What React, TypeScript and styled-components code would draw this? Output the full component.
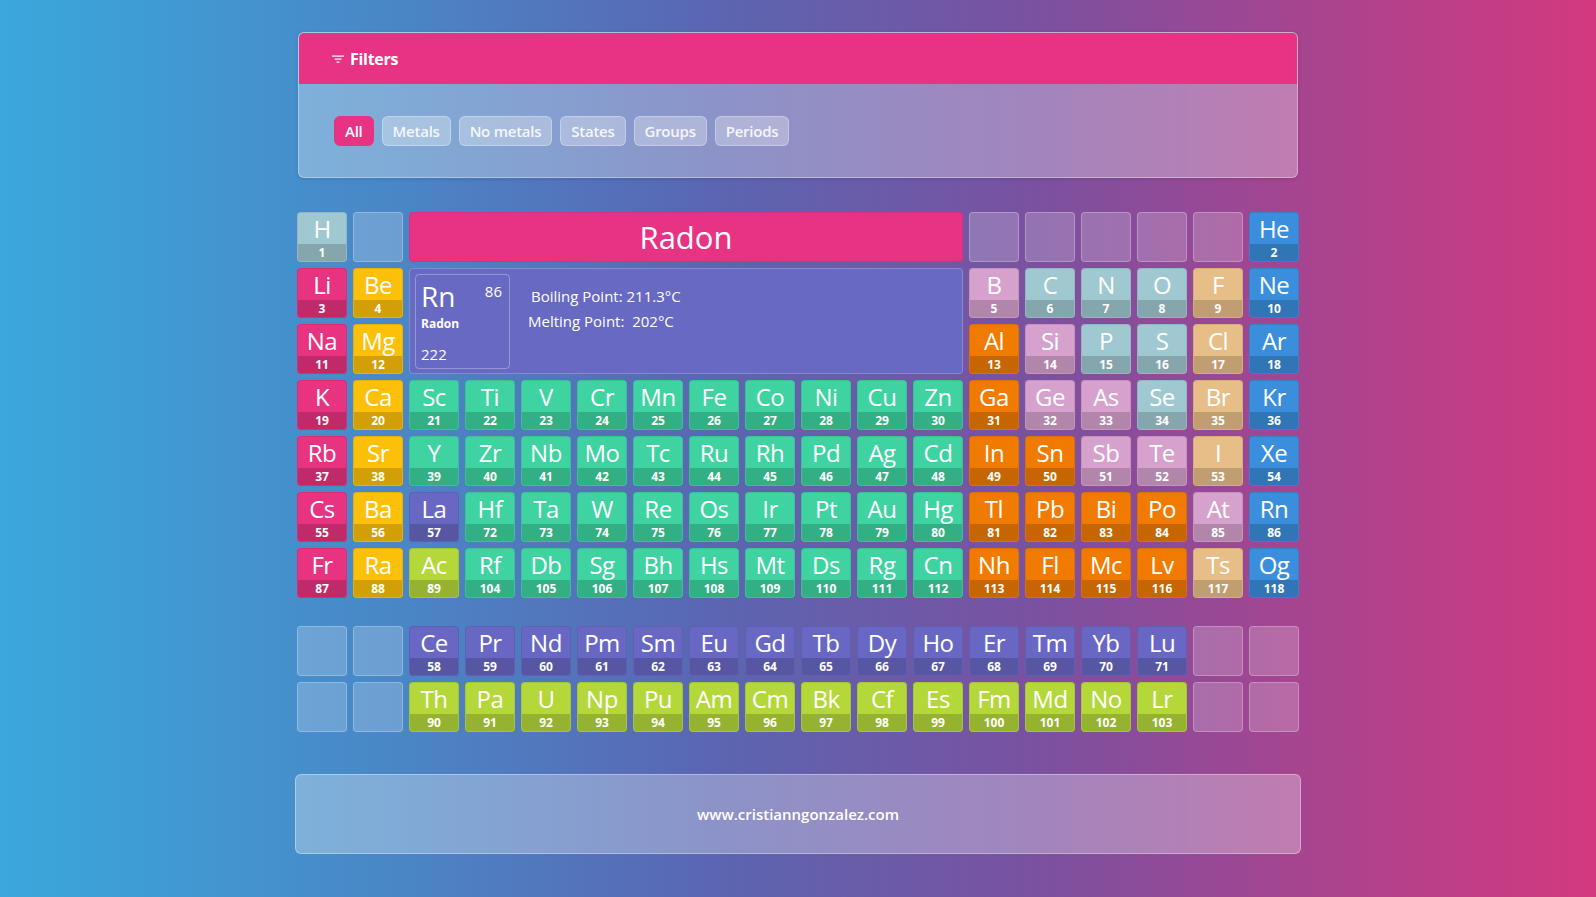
import React from "react";
import styled, { createGlobalStyle } from "styled-components";

const GlobalStyle = createGlobalStyle`
  html, body { margin: 0; padding: 0; }
  body {
    min-height: 100vh;
    font-family: "Open Sans", "Noto Sans", sans-serif;
    background: linear-gradient(90deg, #3aa8dc 0%, #4a86c6 25%, #5b65b1 45%, #7a51a0 65%, #a8448f 82%, #d3397f 100%);
    color: #fff;
  }
`;

type Cat =
  | "alkali"
  | "alkaline"
  | "transition"
  | "post"
  | "metalloid"
  | "nonmetal"
  | "halogen"
  | "noble"
  | "lanthanide"
  | "actinide";

const COLORS: Record<Cat, string> = {
  alkali: "#e83380",
  alkaline: "#fdc009",
  transition: "#3ed3a0",
  post: "#f07b00",
  metalloid: "#d6a2cd",
  nonmetal: "#a0c8d0",
  halogen: "#e7be88",
  noble: "#3a8edc",
  lanthanide: "#6868c4",
  actinide: "#b4d83a",
};

type Cell = { s: string; n: number; c: Cat; col: number; row: number } | { empty: true; col: number; row: number };

const cells: Cell[] = [];
const el = (s: string, n: number, c: Cat, col: number, row: number) => cells.push({ s, n, c, col, row });
const empty = (col: number, row: number) => cells.push({ empty: true, col, row });

// Row 1
el("H", 1, "nonmetal", 1, 1);
empty(2, 1);
[13, 14, 15, 16, 17].forEach((c) => empty(c, 1));
el("He", 2, "noble", 18, 1);
// Row 2
el("Li", 3, "alkali", 1, 2);
el("Be", 4, "alkaline", 2, 2);
el("B", 5, "metalloid", 13, 2);
el("C", 6, "nonmetal", 14, 2);
el("N", 7, "nonmetal", 15, 2);
el("O", 8, "nonmetal", 16, 2);
el("F", 9, "halogen", 17, 2);
el("Ne", 10, "noble", 18, 2);
// Row 3
el("Na", 11, "alkali", 1, 3);
el("Mg", 12, "alkaline", 2, 3);
el("Al", 13, "post", 13, 3);
el("Si", 14, "metalloid", 14, 3);
el("P", 15, "nonmetal", 15, 3);
el("S", 16, "nonmetal", 16, 3);
el("Cl", 17, "halogen", 17, 3);
el("Ar", 18, "noble", 18, 3);

const fullRow = (row: number, syms: string[], start: number, cats: Cat[]) => {
  syms.forEach((s, i) => el(s, start + i, cats[i], i + 1, row));
};
const T: Cat = "transition";
fullRow(
  4,
  ["K", "Ca", "Sc", "Ti", "V", "Cr", "Mn", "Fe", "Co", "Ni", "Cu", "Zn", "Ga", "Ge", "As", "Se", "Br", "Kr"],
  19,
  ["alkali", "alkaline", T, T, T, T, T, T, T, T, T, T, "post", "metalloid", "metalloid", "nonmetal", "halogen", "noble"]
);
fullRow(
  5,
  ["Rb", "Sr", "Y", "Zr", "Nb", "Mo", "Tc", "Ru", "Rh", "Pd", "Ag", "Cd", "In", "Sn", "Sb", "Te", "I", "Xe"],
  37,
  ["alkali", "alkaline", T, T, T, T, T, T, T, T, T, T, "post", "post", "metalloid", "metalloid", "halogen", "noble"]
);
el("Cs", 55, "alkali", 1, 6);
el("Ba", 56, "alkaline", 2, 6);
el("La", 57, "lanthanide", 3, 6);
["Hf", "Ta", "W", "Re", "Os", "Ir", "Pt", "Au", "Hg"].forEach((s, i) => el(s, 72 + i, T, 4 + i, 6));
["Tl", "Pb", "Bi", "Po"].forEach((s, i) => el(s, 81 + i, "post", 13 + i, 6));
el("At", 85, "metalloid", 17, 6);
el("Rn", 86, "noble", 18, 6);
el("Fr", 87, "alkali", 1, 7);
el("Ra", 88, "alkaline", 2, 7);
el("Ac", 89, "actinide", 3, 7);
["Rf", "Db", "Sg", "Bh", "Hs", "Mt", "Ds", "Rg", "Cn"].forEach((s, i) => el(s, 104 + i, T, 4 + i, 7));
["Nh", "Fl", "Mc", "Lv"].forEach((s, i) => el(s, 113 + i, "post", 13 + i, 7));
el("Ts", 117, "halogen", 17, 7);
el("Og", 118, "noble", 18, 7);
// f-block
[1, 2, 17, 18].forEach((c) => {
  empty(c, 9);
  empty(c, 10);
});
["Ce", "Pr", "Nd", "Pm", "Sm", "Eu", "Gd", "Tb", "Dy", "Ho", "Er", "Tm", "Yb", "Lu"].forEach((s, i) =>
  el(s, 58 + i, "lanthanide", 3 + i, 9)
);
["Th", "Pa", "U", "Np", "Pu", "Am", "Cm", "Bk", "Cf", "Es", "Fm", "Md", "No", "Lr"].forEach((s, i) =>
  el(s, 90 + i, "actinide", 3 + i, 10)
);

const Page = styled.div`
  width: 1008px;
  margin: 0 auto;
  padding-top: 32px;
  padding-bottom: 43px;
  display: flex;
  flex-direction: column;
  align-items: center;
`;

const FilterPanel = styled.section`
  width: 1000px;
  box-sizing: border-box;
  border-radius: 6px;
  overflow: hidden;
  border: 1px solid rgba(255, 255, 255, 0.35);
  background: rgba(255, 255, 255, 0.3);
  box-shadow: 0 1px 4px rgba(0, 0, 0, 0.12);
`;

const FilterHeader = styled.header`
  height: 51px;
  background: #e83283;
  display: flex;
  align-items: center;
  gap: 6px;
  padding-left: 33px;
  font-weight: 700;
  font-size: 16px;
  letter-spacing: -0.3px;
`;

const FilterBody = styled.div`
  height: 93px;
  box-sizing: border-box;
  padding: 32px 35px 31px;
  display: flex;
  gap: 8px;
`;

const FilterButton = styled.button<{ $active?: boolean }>`
  height: 30px;
  box-sizing: border-box;
  padding: 0 10px;
  border-radius: 6px;
  font-family: inherit;
  font-size: 15px;
  font-weight: 600;
  letter-spacing: -0.25px;
  color: ${(p) => (p.$active ? "#fff" : "rgba(255,255,255,0.9)")};
  background: ${(p) => (p.$active ? "#e83283" : "rgba(255,255,255,0.3)")};
  border: 1px solid ${(p) => (p.$active ? "#e83283" : "rgba(255,255,255,0.3)")};
  cursor: pointer;
`;

const Table = styled.div`
  margin-top: 31px;
  display: grid;
  grid-template-columns: repeat(18, 56px);
  grid-template-rows: repeat(7, 56px) 22px repeat(2, 56px);
`;

const Slot = styled.div<{ $col: number; $row: number }>`
  grid-column: ${(p) => p.$col};
  grid-row: ${(p) => p.$row};
  margin: 3px;
  border-radius: 4px;
  box-sizing: border-box;
`;

const Tile = styled(Slot)<{ $bg: string }>`
  background: ${(p) => p.$bg};
  border: 1px solid rgba(0, 0, 0, 0.08);
  display: flex;
  flex-direction: column;
  overflow: hidden;
`;

const Symbol = styled.div`
  flex: 1;
  display: flex;
  align-items: center;
  justify-content: center;
  font-size: 24px;
  font-weight: 500;
  letter-spacing: -0.5px;
  line-height: 1;
`;

const Num = styled.div`
  height: 17px;
  background: rgba(0, 0, 0, 0.17);
  display: flex;
  align-items: center;
  justify-content: center;
  font-size: 12px;
  font-weight: 700;
`;

const EmptySlot = styled(Slot)`
  background: rgba(255, 255, 255, 0.2);
  border: 1px solid rgba(255, 255, 255, 0.25);
`;

const Title = styled.div`
  grid-column: 3 / span 10;
  grid-row: 1;
  margin: 3px;
  border-radius: 4px;
  background: #e83283;
  border: 1px solid rgba(0, 0, 0, 0.06);
  display: flex;
  align-items: center;
  justify-content: center;
  font-size: 31px;
  font-weight: 500;
`;

const Info = styled.div`
  grid-column: 3 / span 10;
  grid-row: 2 / span 2;
  margin: 3px;
  border-radius: 4px;
  background: #6769c2;
  border: 1px solid rgba(255, 255, 255, 0.22);
  box-sizing: border-box;
  padding: 5px;
  display: flex;
  gap: 18px;
`;

const Card = styled.div`
  width: 95px;
  height: 95px;
  box-sizing: border-box;
  border: 1px solid rgba(255, 255, 255, 0.3);
  border-radius: 4px;
  position: relative;
  padding: 3px 5px 4px;
  display: flex;
  flex-direction: column;
`;

const CardSymbol = styled.div`
  font-size: 28px;
  font-weight: 500;
  line-height: 36px;
`;

const CardNumber = styled.div`
  position: absolute;
  top: 6px;
  right: 7px;
  font-size: 15px;
  font-weight: 500;
`;

const CardName = styled.div`
  font-size: 12px;
  font-weight: 700;
  margin-top: 1px;
`;

const CardMass = styled.div`
  margin-top: auto;
  font-size: 15px;
  font-weight: 500;
`;

const Stats = styled.div`
  padding-top: 13px;
  display: flex;
  flex-direction: column;
  gap: 7px;
  font-size: 15px;
  font-weight: 500;
  line-height: 18px;
`;

const StatLine = styled.div<{ $shift?: number }>`
  margin-left: ${(p) => p.$shift ?? 0}px;
  white-space: pre;
`;

const Footer = styled.footer`
  margin-top: 39px;
  width: 1006px;
  height: 80px;
  box-sizing: border-box;
  border-radius: 6px;
  border: 1px solid rgba(255, 255, 255, 0.35);
  background: rgba(255, 255, 255, 0.3);
  display: flex;
  align-items: center;
  justify-content: center;
  font-size: 15px;
  font-weight: 600;
`;

const FilterIcon = () => (
  <svg width="12" height="10" viewBox="0 0 12 10">
    <rect x="0" y="1.5" width="12" height="1.2" fill="#fff" />
    <rect x="2.5" y="4.5" width="7" height="1.2" fill="#fff" />
    <rect x="4.5" y="7.5" width="3" height="1.2" fill="#fff" />
  </svg>
);

const filters = ["All", "Metals", "No metals", "States", "Groups", "Periods"];

export default function App() {
  return (
    <>
      <GlobalStyle />
      <Page>
        <FilterPanel>
          <FilterHeader>
            <FilterIcon />
            Filters
          </FilterHeader>
          <FilterBody>
            {filters.map((f, i) => (
              <FilterButton key={f} $active={i === 0}>
                {f}
              </FilterButton>
            ))}
          </FilterBody>
        </FilterPanel>

        <Table>
          <Title>Radon</Title>
          <Info>
            <Card>
              <CardSymbol>Rn</CardSymbol>
              <CardNumber>86</CardNumber>
              <CardName>Radon</CardName>
              <CardMass>222</CardMass>
            </Card>
            <Stats>
              <StatLine $shift={3}>Boiling Point: 211.3°C</StatLine>
              <StatLine>Melting Point:  202°C</StatLine>
            </Stats>
          </Info>
          {cells.map((c, i) =>
            "empty" in c ? (
              <EmptySlot key={i} $col={c.col} $row={c.row} />
            ) : (
              <Tile key={i} $col={c.col} $row={c.row} $bg={COLORS[c.c]}>
                <Symbol>{c.s}</Symbol>
                <Num>{c.n}</Num>
              </Tile>
            )
          )}
        </Table>

        <Footer>www.cristianngonzalez.com</Footer>
      </Page>
    </>
  );
}
